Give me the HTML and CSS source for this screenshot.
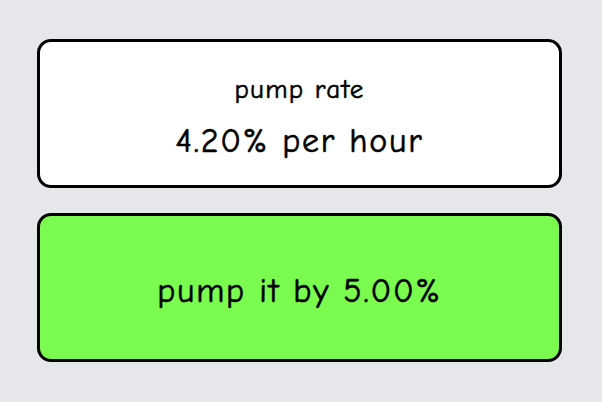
FILE: index.html
```html
<!DOCTYPE html>
<html lang="en">
<head>
  <meta charset="UTF-8" />
  <meta name="viewport" content="width=device-width, initial-scale=1.0" />
  <title>Pump</title>
  <link rel="stylesheet" href="styles.css">
</head>
<body>
  <div class="container">
    <div class="card rate">
      <p class="label">pump rate</p>
      <p class="value">4.20% per hour</p>
    </div>
    <button class="card pump">pump it by 5.00%</button>
  </div>
</body>
</html>
```

FILE: styles.css
```css
:root {
  --bg: #e5e7eb;
  --green: #7bfb4f;
  --text: #000000;
}

* {
  box-sizing: border-box;
}

body {
  margin: 0;
  background-color: var(--bg);
  font-family: 'Comic Sans MS', 'Comic Neue', 'DejaVu Sans', sans-serif;
  color: var(--text);
  -webkit-text-stroke: 0.6px var(--text);
}

.container {
  width: 525px;
  margin: 39px 0 0 37px;
  display: flex;
  flex-direction: column;
  gap: 25px;
}

.card {
  height: 149px;
  border: 3px solid #000;
  border-radius: 14px;
  display: flex;
  flex-direction: column;
  align-items: center;
  justify-content: center;
}

.rate {
  background-color: #ffffff;
  padding-top: 8px;
  gap: 12px;
}

.rate p {
  margin: 0;
  line-height: 1.3;
}

.label {
  font-size: 27px;
  letter-spacing: 1.3px;
}

.value {
  font-size: 34px;
  letter-spacing: 1.8px;
}

.pump {
  width: 100%;
  padding-top: 8px;
  background-color: var(--green);
  font-family: inherit;
  font-size: 34px;
  letter-spacing: 1.8px;
  color: var(--text);
  cursor: pointer;
}
```
